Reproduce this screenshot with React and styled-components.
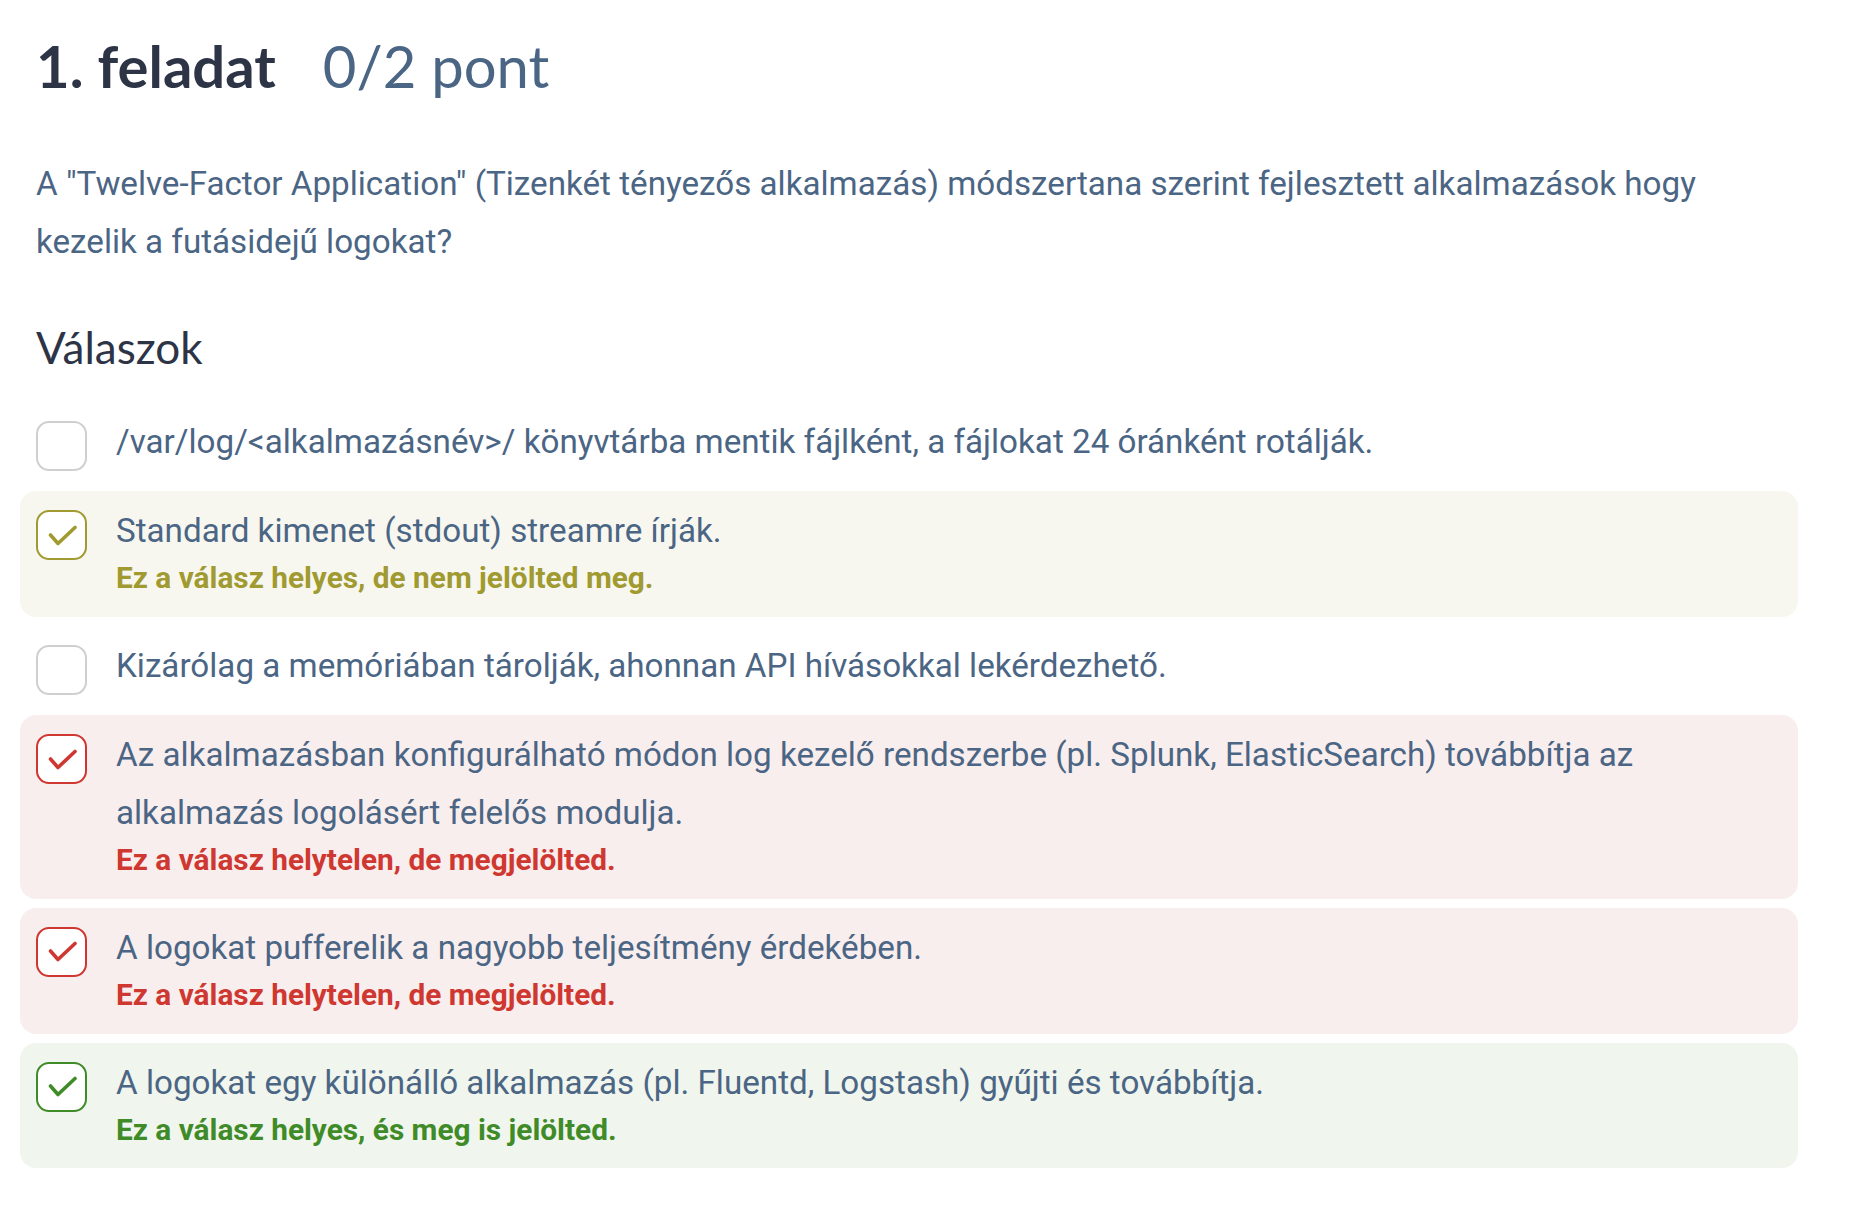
import React from "react";
import styled, { createGlobalStyle } from "styled-components";

const GlobalStyle = createGlobalStyle`
  html, body { margin: 0; padding: 0; background: #ffffff; }
  body { font-family: Roboto, "Liberation Sans", sans-serif; }
`;

const Page = styled.main`
  padding: 31px 82px 0 36px;
  font-family: Roboto, "Liberation Sans", sans-serif;
  color: #4b6584;
`;

const Title = styled.h1`
  margin: 0;
  display: flex;
  gap: 47px;
  font-family: Lato, "Noto Sans", sans-serif;
  font-size: 58px;
  line-height: 1.2;
  font-weight: 700;
  color: #2d3446;
`;

const Points = styled.span`
  font-weight: 400;
  color: #4b6584;
`;

const Question = styled.p`
  margin: 54px 0 0;
  font-size: 33.2px;
  line-height: 58px;
  color: #4b6584;
`;

const SubTitle = styled.h2`
  margin: 50px 0 0;
  font-family: Lato, "Noto Sans", sans-serif;
  font-size: 44px;
  line-height: 1.2;
  font-weight: 400;
  color: #2d3446;
`;

const List = styled.ul`
  list-style: none;
  margin: 29px -16px 0;
  padding: 0;
  display: flex;
  flex-direction: column;
  gap: 9px;
`;

const tones = {
  none: { bg: "transparent", border: "#cfcfcf", fg: "transparent" },
  missed: { bg: "#f7f7f0", border: "#a09a30", fg: "#a09a30" },
  wrong: { bg: "#f9eeee", border: "#cf3731", fg: "#cf3731" },
  right: { bg: "#f0f5ee", border: "#3f8b28", fg: "#3f8b28" },
};

const Item = styled.li`
  display: flex;
  align-items: flex-start;
  gap: 29px;
  padding: 11px 16px;
  border-radius: 16px;
  background: ${(p) => tones[p.$tone].bg};
`;

const Box = styled.span`
  flex: none;
  box-sizing: border-box;
  width: 51px;
  height: 50px;
  margin-top: 8px;
  border: 2px solid ${(p) => tones[p.$tone].border};
  border-radius: 13px;
  background: #ffffff;
  display: flex;
  align-items: center;
  justify-content: center;
  color: ${(p) => tones[p.$tone].fg};
`;

const Body = styled.div`
  display: flex;
  flex-direction: column;
  min-width: 0;
`;

const AnswerText = styled.span`
  font-size: 33.2px;
  line-height: 58px;
  color: #4b6584;
`;

const Feedback = styled.span`
  font-size: 29.8px;
  line-height: 1.2;
  font-weight: 700;
  margin-bottom: 10px;
  color: ${(p) => tones[p.$tone].fg};
`;

const Check = () => (
  <svg width="30" height="22" viewBox="0 0 30 22" fill="none" style={{ marginLeft: 3, marginTop: 1 }}>
    <path
      d="M2.5 10 L10 18.5 L27 2.5"
      stroke="currentColor"
      strokeWidth="3.6"
      strokeLinecap="round"
      strokeLinejoin="round"
    />
  </svg>
);

const answers = [
  {
    tone: "none",
    text: "/var/log/<alkalmazásnév>/ könyvtárba mentik fájlként, a fájlokat 24 óránként rotálják.",
  },
  {
    tone: "missed",
    text: "Standard kimenet (stdout) streamre írják.",
    feedback: "Ez a válasz helyes, de nem jelölted meg.",
  },
  {
    tone: "none",
    text: "Kizárólag a memóriában tárolják, ahonnan API hívásokkal lekérdezhető.",
  },
  {
    tone: "wrong",
    text: "Az alkalmazásban konfigurálható módon log kezelő rendszerbe (pl. Splunk, ElasticSearch) továbbítja az alkalmazás logolásért felelős modulja.",
    feedback: "Ez a válasz helytelen, de megjelölted.",
  },
  {
    tone: "wrong",
    text: "A logokat pufferelik a nagyobb teljesítmény érdekében.",
    feedback: "Ez a válasz helytelen, de megjelölted.",
  },
  {
    tone: "right",
    text: "A logokat egy különálló alkalmazás (pl. Fluentd, Logstash) gyűjti és továbbítja.",
    feedback: "Ez a válasz helyes, és meg is jelölted.",
  },
];

export default function App() {
  return (
    <>
      <GlobalStyle />
      <Page>
        <Title>
          <span>1. feladat</span>
          <Points>0/2 pont</Points>
        </Title>
        <Question>
          A "Twelve-Factor Application" (Tizenkét tényezős alkalmazás) módszertana szerint
          fejlesztett alkalmazások hogy kezelik a futásidejű logokat?
        </Question>
        <SubTitle>Válaszok</SubTitle>
        <List>
          {answers.map((a, i) => (
            <Item key={i} $tone={a.tone}>
              <Box $tone={a.tone}>{a.tone !== "none" && <Check />}</Box>
              <Body>
                <AnswerText>{a.text}</AnswerText>
                {a.feedback && <Feedback $tone={a.tone}>{a.feedback}</Feedback>}
              </Body>
            </Item>
          ))}
        </List>
      </Page>
    </>
  );
}
